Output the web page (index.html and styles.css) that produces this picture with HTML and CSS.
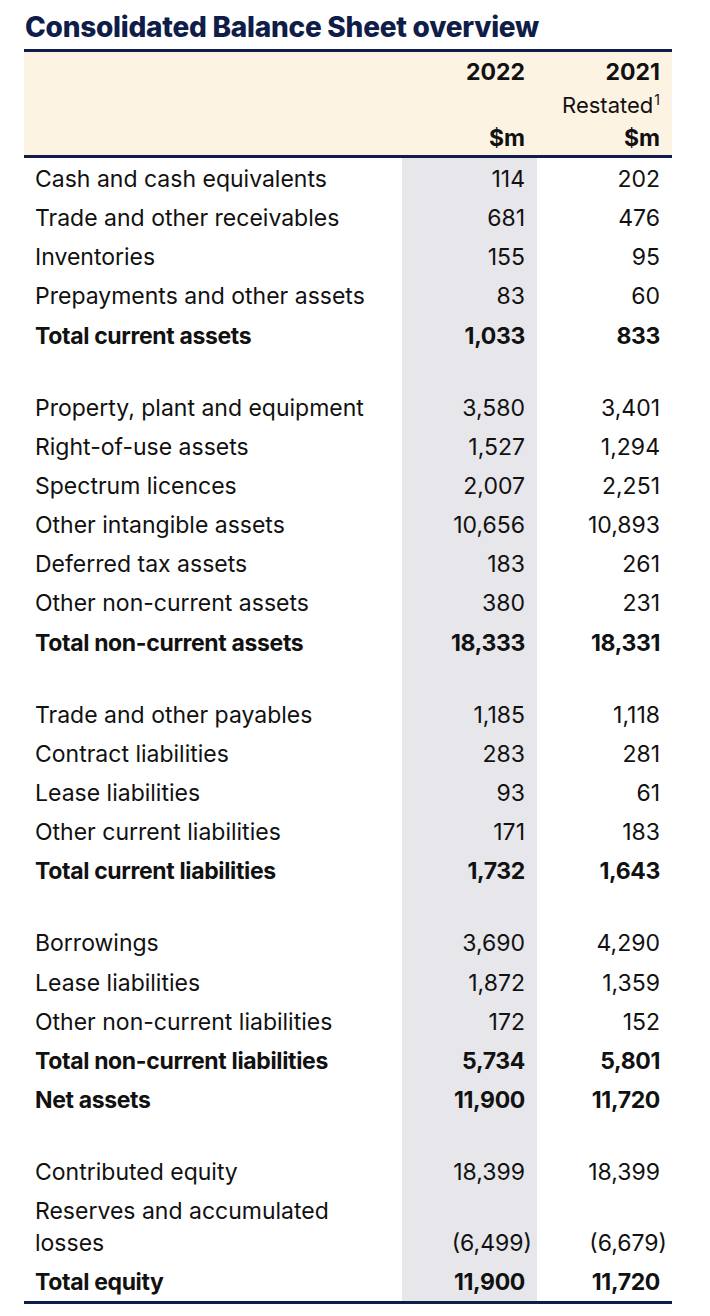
FILE: index.html
```html
<!DOCTYPE html>
<html lang="en">
<head>
<meta charset="utf-8">
<title>Consolidated Balance Sheet overview</title>
<link rel="stylesheet" href="styles.css">
</head>
<body>
<div class="page">
  <h1 class="title">Consolidated Balance Sheet overview</h1>
  <table class="bs">
    <colgroup><col class="c-label"><col class="c-num"><col class="c-num"></colgroup>
    <thead>
      <tr class="h1"><th></th><th>2022</th><th>2021</th></tr>
      <tr class="h2"><th></th><th></th><th class="restated">Restated<sup>1</sup></th></tr>
      <tr class="h3"><th></th><th>$m</th><th>$m</th></tr>
    </thead>
    <tbody>
      <tr><td class="lbl">Cash and cash equivalents</td><td class="cur">114</td><td class="prev">202</td></tr>
      <tr><td class="lbl">Trade and other receivables</td><td class="cur">681</td><td class="prev">476</td></tr>
      <tr><td class="lbl">Inventories</td><td class="cur">155</td><td class="prev">95</td></tr>
      <tr><td class="lbl">Prepayments and other assets</td><td class="cur">83</td><td class="prev">60</td></tr>
      <tr class="total"><td class="lbl">Total current assets</td><td class="cur">1,033</td><td class="prev">833</td></tr>
      <tr class="spacer"><td></td><td class="cur"></td><td></td></tr>
      <tr><td class="lbl">Property, plant and equipment</td><td class="cur">3,580</td><td class="prev">3,401</td></tr>
      <tr><td class="lbl">Right-of-use assets</td><td class="cur">1,527</td><td class="prev">1,294</td></tr>
      <tr><td class="lbl">Spectrum licences</td><td class="cur">2,007</td><td class="prev">2,251</td></tr>
      <tr><td class="lbl">Other intangible assets</td><td class="cur">10,656</td><td class="prev">10,893</td></tr>
      <tr><td class="lbl">Deferred tax assets</td><td class="cur">183</td><td class="prev">261</td></tr>
      <tr><td class="lbl">Other non-current assets</td><td class="cur">380</td><td class="prev">231</td></tr>
      <tr class="total"><td class="lbl">Total non-current assets</td><td class="cur">18,333</td><td class="prev">18,331</td></tr>
      <tr class="spacer"><td></td><td class="cur"></td><td></td></tr>
      <tr><td class="lbl">Trade and other payables</td><td class="cur">1,185</td><td class="prev">1,118</td></tr>
      <tr><td class="lbl">Contract liabilities</td><td class="cur">283</td><td class="prev">281</td></tr>
      <tr><td class="lbl">Lease liabilities</td><td class="cur">93</td><td class="prev">61</td></tr>
      <tr><td class="lbl">Other current liabilities</td><td class="cur">171</td><td class="prev">183</td></tr>
      <tr class="total"><td class="lbl">Total current liabilities</td><td class="cur">1,732</td><td class="prev">1,643</td></tr>
      <tr class="spacer"><td></td><td class="cur"></td><td></td></tr>
      <tr><td class="lbl">Borrowings</td><td class="cur">3,690</td><td class="prev">4,290</td></tr>
      <tr><td class="lbl">Lease liabilities</td><td class="cur">1,872</td><td class="prev">1,359</td></tr>
      <tr><td class="lbl">Other non-current liabilities</td><td class="cur">172</td><td class="prev">152</td></tr>
      <tr class="total"><td class="lbl">Total non-current liabilities</td><td class="cur">5,734</td><td class="prev">5,801</td></tr>
      <tr class="total"><td class="lbl">Net assets</td><td class="cur">11,900</td><td class="prev">11,720</td></tr>
      <tr class="spacer"><td></td><td class="cur"></td><td></td></tr>
      <tr><td class="lbl">Contributed equity</td><td class="cur">18,399</td><td class="prev">18,399</td></tr>
      <tr class="wrap"><td class="lbl">Reserves and accumulated<br>losses</td><td class="cur">(6,499<span class="paren">)</span></td><td class="prev">(6,679<span class="paren">)</span></td></tr>
      <tr class="total"><td class="lbl">Total equity</td><td class="cur">11,900</td><td class="prev">11,720</td></tr>
    </tbody>
  </table>
</div>
</body>
</html>
```

FILE: styles.css
```css
html, body {
  margin: 0;
  padding: 0;
  background: #ffffff;
}

body {
  font-family: Inter, "Liberation Sans", Arial, sans-serif;
  color: #111111;
}

.page {
  padding: 11px 0 0 24px;
  width: 648px;
}

.title {
  margin: 0 0 6px 1px;
  font-size: 28px;
  line-height: 32px;
  font-weight: 800;
  color: #0f1d48;
  letter-spacing: -0.25px;
}

.bs {
  width: 648px;
  border-collapse: collapse;
  table-layout: fixed;
  font-size: 23px;
  border-bottom: 3px solid #0f1d48;
}

.c-label { width: 378px; }
.c-num { width: 135px; }

.bs thead {
  background: #fdf3e3;
  border-top: 3px solid #0f1d48;
  border-bottom: 3px solid #0f1d48;
}

.bs th {
  padding: 0 12px 0 0;
  line-height: 33px;
  text-align: right;
  font-weight: 700;
}

.bs .h1 th { padding-top: 4px; }

.bs th.restated {
  font-weight: 400;
  font-size: 22px;
}

.restated sup {
  font-size: 14px;
  vertical-align: 8px;
  line-height: 0;
  margin-left: 1px;
}

.bs td {
  padding: 5px 12px 2.15px 0;
  line-height: 32px;
  text-align: right;
  vertical-align: bottom;
  white-space: nowrap;
}

.bs td.lbl {
  padding-left: 11px;
  text-align: left;
}

.bs td.cur {
  background: #e6e6eb;
}

.total td {
  font-weight: 700;
  letter-spacing: -0.35px;
}

.spacer td {
  height: 33px;
  padding: 0;
}

.paren {
  margin-right: -7px;
}
```
